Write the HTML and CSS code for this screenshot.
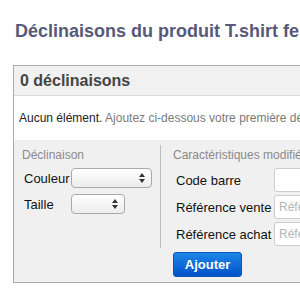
FILE: index.html
```html
<!DOCTYPE html>
<html lang="fr">
  <head>
    <meta charset="utf-8">
    <title>Déclinaisons</title>
    <link rel="stylesheet" href="styles.css">
  </head>
  <body>
    <h1 class="page-title">Déclinaisons du produit T.shirt femme</h1>

    <div class="panel">
      <div class="panel-head">0 déclinaisons</div>
      <div class="panel-msg">
        <span class="msg-strong">Aucun élément.</span>
        Ajoutez ci-dessous votre première déclinaison
      </div>

      <div class="panel-body">
        <div class="col col-left">
          <div class="legend">Déclinaison</div>
          <div class="row">
            <span class="label label-short">Couleur</span>
            <span class="fake-select sel-wide"><span class="arrows"><i class="up"></i><i class="down"></i></span></span>
          </div>
          <div class="row">
            <span class="label label-short">Taille</span>
            <span class="fake-select sel-narrow"><span class="arrows"><i class="up"></i><i class="down"></i></span></span>
          </div>
        </div>

        <div class="col col-right">
          <div class="legend">Caractéristiques modifiées</div>
          <div class="row">
            <span class="label label-long">Code barre</span>
            <input class="field" type="text">
          </div>
          <div class="row">
            <span class="label label-long">Référence vente</span>
            <input class="field" type="text" placeholder="Référence">
          </div>
          <div class="row">
            <span class="label label-long">Référence achat</span>
            <input class="field" type="text" placeholder="Référence">
          </div>
        </div>

        <div class="actions">
          <button class="btn-add">Ajouter</button>
        </div>
      </div>
    </div>
  </body>
</html>
```

FILE: styles.css
```css
* {
  box-sizing: border-box;
}
body {
  margin: 0;
  font-family: "Liberation Sans", Arial, sans-serif;
  background-color: #ffffff;
  overflow: hidden;
  width: 300px;
  height: 300px;
}

.page-title {
  margin: 20px 0 0 15px;
  font-size: 18px;
  line-height: 22px;
  font-weight: bold;
  color: #575979;
  white-space: nowrap;
}

.panel {
  margin: 23px 0 0 13px;
  width: 600px;
  border: 1px solid #ababab;
}
.panel-head {
  height: 30px;
  line-height: 30px;
  padding-left: 6px;
  background-color: #f1f1f1;
  border-bottom: 1px solid #dcdcdc;
  font-size: 16px;
  font-weight: bold;
  color: #444444;
}
.panel-msg {
  height: 44px;
  line-height: 44px;
  padding-left: 5px;
  font-size: 12px;
  color: #7a7a7a;
  white-space: nowrap;
}
.msg-strong {
  color: #222222;
}

.panel-body {
  display: grid;
  grid-template-columns: 147px 1fr;
  background-color: #f0f0f0;
  padding-top: 5px;
  padding-bottom: 5px;
}
.col {
  padding-top: 2px;
  height: 103px;
}
.col-left {
  padding-left: 8px;
  border-right: 1px solid #bdbdbd;
}
.col-right {
  padding-left: 12px;
}
.legend {
  font-size: 12px;
  line-height: 16px;
  color: #8a8a8a;
  white-space: nowrap;
}
.row {
  display: flex;
  align-items: center;
  white-space: nowrap;
}
.col-left .row {
  height: 20px;
  padding-left: 2px;
  margin-top: 6px;
}
.col-left .legend + .row {
  margin-top: 5px;
}
.col-right .row {
  height: 24px;
  padding-left: 3px;
  margin-top: 3px;
}
.col-right .legend + .row {
  margin-top: 5px;
}
.label {
  font-size: 13px;
  color: #111111;
}
.label-short {
  width: 47px;
}
.label-long {
  width: 98px;
}

.fake-select {
  position: relative;
  display: inline-block;
  height: 20px;
  border: 1px solid #a9a9a9;
  border-radius: 4px;
  background: linear-gradient(#ffffff, #ececec);
}
.sel-wide {
  width: 81px;
}
.sel-narrow {
  width: 54px;
}
.arrows {
  position: absolute;
  right: 6px;
  top: 4px;
  display: flex;
  flex-direction: column;
  gap: 2px;
}
.arrows i {
  display: block;
  width: 0;
  height: 0;
  border-left: 3px solid transparent;
  border-right: 3px solid transparent;
}
.arrows .up {
  border-bottom: 4px solid #333333;
}
.arrows .down {
  border-top: 4px solid #333333;
}

.field {
  width: 120px;
  height: 24px;
  margin: 0;
  padding: 0 4px;
  border: 1px solid #cccccc;
  border-radius: 3px;
  background-color: #ffffff;
  font-family: "Liberation Sans", Arial, sans-serif;
  font-size: 12px;
}
.field::placeholder {
  color: #b5b5b5;
}

.actions {
  grid-column: 2;
  padding-left: 12px;
  padding-top: 4px;
}
.btn-add {
  width: 69px;
  height: 25px;
  border: 1px solid #0a55b8;
  border-radius: 3px;
  background: linear-gradient(#1d86e6, #0052c9);
  color: #ffffff;
  font-family: "Liberation Sans", Arial, sans-serif;
  font-size: 13px;
  font-weight: bold;
  padding: 0;
}
```
